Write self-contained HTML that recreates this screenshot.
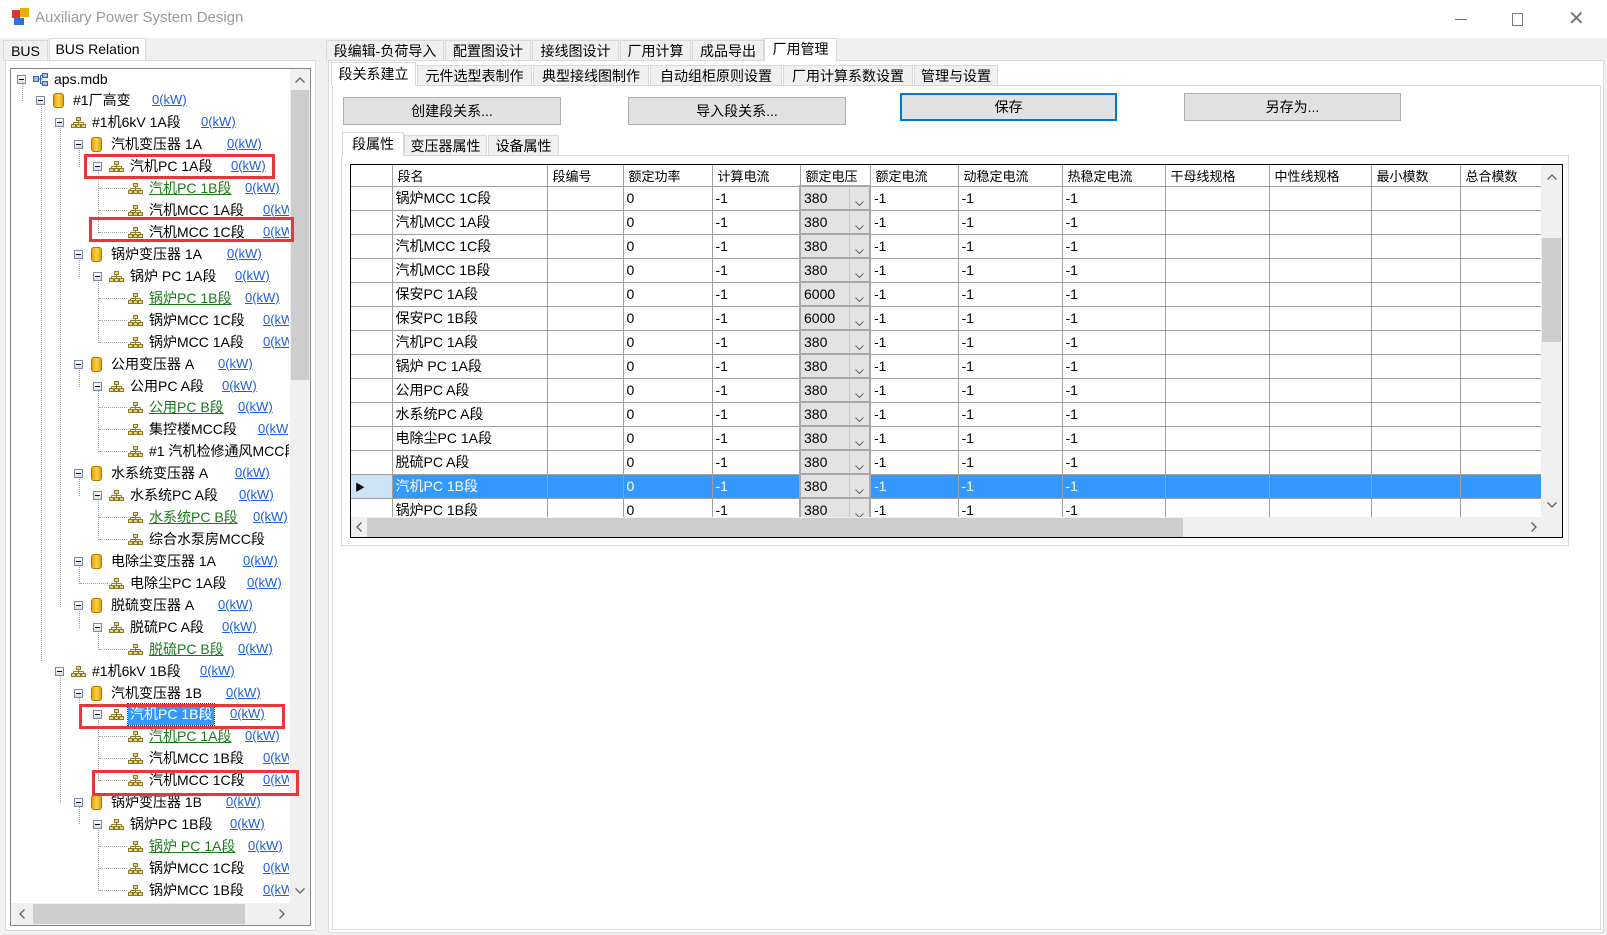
<!DOCTYPE html>
<html><head><meta charset="utf-8">
<style>
*{box-sizing:border-box;margin:0;padding:0}
body{width:1607px;height:935px;overflow:hidden;background:#f0f0f0;font-family:"Liberation Sans","Noto Sans CJK SC",sans-serif;font-size:14px;color:#000;position:relative}
.a{position:absolute;white-space:nowrap}
.tab{position:absolute;border:1px solid #d9d9d9;border-bottom:none;background:#f0f0f0;text-align:center;line-height:20px;font-size:14px}
.sel{background:#fff}
.btn{position:absolute;background:#e1e1e1;border:1px solid #adadad;text-align:center;font-size:14px}
.r{position:absolute;left:0;width:300px;height:21px}
.r>*{position:absolute}
.t{top:0;line-height:21px;font-size:14px;white-space:nowrap}
.bx{top:6px;width:9px;height:9px;border:1px solid #7a8aa6;background:linear-gradient(#fff,#d8dce4)}
.bx:after{content:"";position:absolute;left:1px;top:3px;width:5px;height:1px;background:#000}
.cy{top:3px;width:11px;height:15px;border-radius:3px;background:linear-gradient(90deg,#e8a000,#ffd24d,#e8a000);border:1px solid #b07800}
.nt{top:5px;width:15px;height:11px}
.kw{top:2px;color:#1a5fd8;text-decoration:underline;font-size:13px;line-height:16px;white-space:nowrap}
.g{color:#1a7a1a;text-decoration:underline}
.hl{position:absolute;border-top:1px dotted #a0a0a0;height:0}
.vl{position:absolute;border-left:1px dotted #a0a0a0;width:0}
.red{position:absolute;border:3px solid #e8363a}
table{border-collapse:collapse;table-layout:fixed}
td{border:1px solid #a0a0a0;height:24px;padding:0 0 0 3px;font-size:14px;overflow:hidden;white-space:nowrap}
th{border:1px solid #a0a0a0;border-top:none;height:21px;font-weight:normal;text-align:left;padding-left:5px;font-size:13px;white-space:nowrap;overflow:hidden}
td.v{background:#e3e3e3;border:2px solid #a8a8a8;position:relative}
td.v:after{content:"";position:absolute;right:0;top:0;width:19px;height:100%;border-left:1px solid #c8c8c8;}
td.v i{position:absolute;right:5px;top:7px;width:9px;height:6px;z-index:1}
tr.s td{background:#3399ff;color:#fff}
</style></head><body>
<svg width="0" height="0" style="position:absolute">
<symbol id="net" viewBox="0 0 15 11"><rect x="5.5" y="0.5" width="4" height="3" fill="#f4d76a" stroke="#8a7a30"/><path d="M7.5 3.5V5.5M2.5 5.5H12.5M2.5 5.5V7.5M7.5 5.5V7.5M12.5 5.5V7.5" stroke="#8a7a30" fill="none"/><rect x="0.5" y="7.5" width="4" height="3" fill="#f4d76a" stroke="#8a7a30"/><rect x="5.5" y="7.5" width="4" height="3" fill="#f4d76a" stroke="#8a7a30"/><rect x="10.5" y="7.5" width="4" height="3" fill="#f4d76a" stroke="#8a7a30"/></symbol>
<symbol id="chv" viewBox="0 0 9 6"><path d="M0.5 0.5L4.5 4.5L8.5 0.5" stroke="#666" fill="none"/></symbol>
</svg>
<!-- title bar -->
<div class="a" style="left:0;top:0;width:1607px;height:38px;background:#fff"></div>
<div class="a" style="left:12px;top:10px;width:8px;height:8px;background:#d33"></div>
<div class="a" style="left:20px;top:8px;width:9px;height:9px;background:#e8b000"></div>
<div class="a" style="left:14px;top:18px;width:10px;height:7px;background:#3a6fd8"></div>
<div class="a" style="left:35px;top:9px;font-size:15px;color:#9a9a9a">Auxiliary Power System Design</div>
<div class="a" style="left:1455px;top:19px;width:12px;height:1px;background:#777"></div>
<div class="a" style="left:1512px;top:13px;width:11px;height:13px;border:1px solid #777"></div>
<div class="a" style="left:1568px;top:6px;font-size:20px;color:#777;font-weight:200">✕</div>

<!-- left tabs -->
<div class="tab" style="left:3px;top:40px;width:45px;height:21px">BUS</div>
<div class="tab sel" style="left:49px;top:38px;width:97px;height:23px;line-height:20px">BUS Relation</div>
<div class="a" style="left:5px;top:60px;width:311px;height:871px;background:#fff;border:1px solid #d9d9d9"></div>
<div class="a" style="left:10px;top:68px;width:301px;height:858px;border:1px solid #828790;background:#fff;overflow:hidden">
<div style="position:absolute;left:279px;top:0;width:20px;height:834px;background:#f0f0f0"></div>
<div style="position:absolute;left:280px;top:21px;width:18px;height:290px;background:#cdcdcd"></div>
<svg style="position:absolute;left:284px;top:8px" width="10" height="6"><path d="M0.5 5.5L5 1L9.5 5.5" stroke="#606060" fill="none" stroke-width="1.3"/></svg>
<svg style="position:absolute;left:284px;top:819px" width="10" height="6"><path d="M0.5 0.5L5 5L9.5 0.5" stroke="#606060" fill="none" stroke-width="1.3"/></svg>
<div style="position:absolute;left:0;top:834px;width:299px;height:22px;background:#f0f0f0"></div>
<div style="position:absolute;left:22px;top:835px;width:212px;height:20px;background:#cdcdcd"></div>
<svg style="position:absolute;left:8px;top:840px" width="6" height="10"><path d="M5.5 0.5L1 5L5.5 9.5" stroke="#606060" fill="none" stroke-width="1.3"/></svg>
<svg style="position:absolute;left:268px;top:840px" width="6" height="10"><path d="M0.5 0.5L5 5L0.5 9.5" stroke="#606060" fill="none" stroke-width="1.3"/></svg>
</div>

<!-- right main tabs -->
<div class="tab" style="left:326px;top:40px;width:118px;height:21px">段编辑-负荷导入</div>
<div class="tab" style="left:445px;top:40px;width:86px;height:21px">配置图设计</div>
<div class="tab" style="left:532px;top:40px;width:87px;height:21px">接线图设计</div>
<div class="tab" style="left:620px;top:40px;width:71px;height:21px">厂用计算</div>
<div class="tab" style="left:692px;top:40px;width:72px;height:21px">成品导出</div>
<div class="a" style="left:328px;top:60px;width:1276px;height:873px;background:#fff;border:1px solid #d9d9d9"></div>
<div class="tab sel" style="left:764px;top:38px;width:73px;height:23px;border-color:#d9d9d9">厂用管理</div>
<div class="tab" style="left:417px;top:65px;width:115px;height:21px">元件选型表制作</div>
<div class="tab" style="left:533px;top:65px;width:116px;height:21px">典型接线图制作</div>
<div class="tab" style="left:650px;top:65px;width:132px;height:21px">自动组柜原则设置</div>
<div class="tab" style="left:783px;top:65px;width:130px;height:21px">厂用计算系数设置</div>
<div class="tab" style="left:914px;top:65px;width:84px;height:21px">管理与设置</div>
<div class="a" style="left:332px;top:85px;width:1269px;height:845px;background:#fff;border:1px solid #d9d9d9"></div>
<div class="tab sel" style="left:331px;top:62px;width:85px;height:24px;line-height:22px">段关系建立</div>

<div class="btn" style="left:343px;top:97px;width:218px;height:28px;line-height:26px">创建段关系...</div>
<div class="btn" style="left:628px;top:97px;width:218px;height:28px;line-height:26px">导入段关系...</div>
<div class="btn" style="left:900px;top:93px;width:217px;height:28px;line-height:24px;border:2px solid #0078d7">保存</div>
<div class="btn" style="left:1184px;top:93px;width:217px;height:28px;line-height:26px">另存为...</div>

<div class="tab" style="left:404px;top:135px;width:83px;height:21px">变压器属性</div>
<div class="tab" style="left:488px;top:135px;width:71px;height:21px">设备属性</div>
<div class="a" style="left:341px;top:155px;width:1228px;height:391px;background:#fff;border:1px solid #d9d9d9"></div>
<div class="tab sel" style="left:342px;top:132px;width:62px;height:24px;line-height:22px">段属性</div>

<!-- grid -->
<div class="a" style="left:350px;top:164px;width:1213px;height:374px;border:1px solid #000;background:#fff;overflow:hidden">
<div style="position:absolute;left:0;top:0;width:1190px;height:352px;overflow:hidden">
<table style="width:1190px">
<colgroup><col style="width:41px"><col style="width:155px"><col style="width:76px"><col style="width:89px"><col style="width:88px"><col style="width:70px"><col style="width:88px"><col style="width:104px"><col style="width:103px"><col style="width:104px"><col style="width:102px"><col style="width:89px"><col style="width:81px"></colgroup>
<tr><th style="border-left:none"></th><th>段名</th><th>段编号</th><th>额定功率</th><th>计算电流</th><th>额定电压</th><th>额定电流</th><th>动稳定电流</th><th>热稳定电流</th><th>干母线规格</th><th>中性线规格</th><th>最小模数</th><th>总合模数</th></tr>
<tr><td style="border-left:none"></td><td>锅炉MCC 1C段</td><td></td><td>0</td><td>-1</td><td class="v">380<i><svg width="9" height="6"><use href="#chv"/></svg></i></td><td>-1</td><td>-1</td><td>-1</td><td></td><td></td><td></td><td></td></tr>
<tr><td style="border-left:none"></td><td>汽机MCC 1A段</td><td></td><td>0</td><td>-1</td><td class="v">380<i><svg width="9" height="6"><use href="#chv"/></svg></i></td><td>-1</td><td>-1</td><td>-1</td><td></td><td></td><td></td><td></td></tr>
<tr><td style="border-left:none"></td><td>汽机MCC 1C段</td><td></td><td>0</td><td>-1</td><td class="v">380<i><svg width="9" height="6"><use href="#chv"/></svg></i></td><td>-1</td><td>-1</td><td>-1</td><td></td><td></td><td></td><td></td></tr>
<tr><td style="border-left:none"></td><td>汽机MCC 1B段</td><td></td><td>0</td><td>-1</td><td class="v">380<i><svg width="9" height="6"><use href="#chv"/></svg></i></td><td>-1</td><td>-1</td><td>-1</td><td></td><td></td><td></td><td></td></tr>
<tr><td style="border-left:none"></td><td>保安PC 1A段</td><td></td><td>0</td><td>-1</td><td class="v">6000<i><svg width="9" height="6"><use href="#chv"/></svg></i></td><td>-1</td><td>-1</td><td>-1</td><td></td><td></td><td></td><td></td></tr>
<tr><td style="border-left:none"></td><td>保安PC 1B段</td><td></td><td>0</td><td>-1</td><td class="v">6000<i><svg width="9" height="6"><use href="#chv"/></svg></i></td><td>-1</td><td>-1</td><td>-1</td><td></td><td></td><td></td><td></td></tr>
<tr><td style="border-left:none"></td><td>汽机PC 1A段</td><td></td><td>0</td><td>-1</td><td class="v">380<i><svg width="9" height="6"><use href="#chv"/></svg></i></td><td>-1</td><td>-1</td><td>-1</td><td></td><td></td><td></td><td></td></tr>
<tr><td style="border-left:none"></td><td>锅炉 PC 1A段</td><td></td><td>0</td><td>-1</td><td class="v">380<i><svg width="9" height="6"><use href="#chv"/></svg></i></td><td>-1</td><td>-1</td><td>-1</td><td></td><td></td><td></td><td></td></tr>
<tr><td style="border-left:none"></td><td>公用PC A段</td><td></td><td>0</td><td>-1</td><td class="v">380<i><svg width="9" height="6"><use href="#chv"/></svg></i></td><td>-1</td><td>-1</td><td>-1</td><td></td><td></td><td></td><td></td></tr>
<tr><td style="border-left:none"></td><td>水系统PC A段</td><td></td><td>0</td><td>-1</td><td class="v">380<i><svg width="9" height="6"><use href="#chv"/></svg></i></td><td>-1</td><td>-1</td><td>-1</td><td></td><td></td><td></td><td></td></tr>
<tr><td style="border-left:none"></td><td>电除尘PC 1A段</td><td></td><td>0</td><td>-1</td><td class="v">380<i><svg width="9" height="6"><use href="#chv"/></svg></i></td><td>-1</td><td>-1</td><td>-1</td><td></td><td></td><td></td><td></td></tr>
<tr><td style="border-left:none"></td><td>脱硫PC A段</td><td></td><td>0</td><td>-1</td><td class="v">380<i><svg width="9" height="6"><use href="#chv"/></svg></i></td><td>-1</td><td>-1</td><td>-1</td><td></td><td></td><td></td><td></td></tr>
<tr class="s"><td style="border-left:none;background:#cce4f7;color:#000;font-size:10px;padding-left:4px">▶</td><td>汽机PC 1B段</td><td></td><td>0</td><td>-1</td><td class="v" style="background:#e3e3e3;color:#000">380<i><svg width="9" height="6"><use href="#chv"/></svg></i></td><td>-1</td><td>-1</td><td>-1</td><td></td><td></td><td></td><td></td></tr>
<tr><td style="border-left:none"></td><td>锅炉PC 1B段</td><td></td><td>0</td><td>-1</td><td class="v">380<i><svg width="9" height="6"><use href="#chv"/></svg></i></td><td>-1</td><td>-1</td><td>-1</td><td></td><td></td><td></td><td></td></tr>
</table></div>
<div style="position:absolute;left:1190px;top:0;width:21px;height:352px;background:#f0f0f0"></div>
<div style="position:absolute;left:1191px;top:73px;width:19px;height:104px;background:#cdcdcd"></div>
<svg style="position:absolute;left:1196px;top:9px" width="10" height="6"><path d="M0.5 5.5L5 1L9.5 5.5" stroke="#606060" fill="none" stroke-width="1.3"/></svg>
<svg style="position:absolute;left:1196px;top:337px" width="10" height="6"><path d="M0.5 0.5L5 5L9.5 0.5" stroke="#606060" fill="none" stroke-width="1.3"/></svg>
<div style="position:absolute;left:0;top:352px;width:1211px;height:21px;background:#f0f0f0"></div>
<div style="position:absolute;left:16px;top:353px;width:816px;height:19px;background:#cdcdcd"></div>
<svg style="position:absolute;left:5px;top:357px" width="6" height="10"><path d="M5.5 0.5L1 5L5.5 9.5" stroke="#606060" fill="none" stroke-width="1.3"/></svg>
<svg style="position:absolute;left:1180px;top:357px" width="6" height="10"><path d="M0.5 0.5L5 5L0.5 9.5" stroke="#606060" fill="none" stroke-width="1.3"/></svg>
</div>

<!-- tree -->
<div class="a" style="left:11px;top:69px;width:278px;height:834px;overflow:hidden">
<div style="position:relative;left:-11px;top:-69px;width:300px;height:935px">
<!-- vertical guides -->
<div class="vl" style="left:22px;top:80px;height:21px"></div>
<div class="vl" style="left:41px;top:101px;height:560px"></div>
<div class="vl" style="left:60px;top:123px;height:484px"></div>
<div class="vl" style="left:60px;top:671px;height:132px"></div>
<div class="vl" style="left:79px;top:145px;height:22px"></div>
<div class="vl" style="left:79px;top:255px;height:22px"></div>
<div class="vl" style="left:79px;top:365px;height:22px"></div>
<div class="vl" style="left:79px;top:474px;height:22px"></div>
<div class="vl" style="left:79px;top:562px;height:22px"></div>
<div class="vl" style="left:79px;top:606px;height:22px"></div>
<div class="vl" style="left:79px;top:694px;height:21px"></div>
<div class="vl" style="left:79px;top:803px;height:21px"></div>
<div class="vl" style="left:98px;top:167px;height:66px"></div>
<div class="vl" style="left:98px;top:277px;height:66px"></div>
<div class="vl" style="left:98px;top:387px;height:65px"></div>
<div class="vl" style="left:98px;top:496px;height:44px"></div>
<div class="vl" style="left:98px;top:628px;height:22px"></div>
<div class="vl" style="left:98px;top:715px;height:66px"></div>
<div class="vl" style="left:98px;top:824px;height:67px"></div>

<div class="r" style="top:69px"><div class="bx" style="left:17px"></div><svg style="left:33px;top:4px" width="16" height="13"><rect x="0.5" y="3.5" width="5" height="5" fill="#9cc3f0" stroke="#2f5fb0"/><rect x="9.5" y="0.5" width="5" height="4" fill="#9cc3f0" stroke="#2f5fb0"/><rect x="9.5" y="8.5" width="5" height="4" fill="#9cc3f0" stroke="#2f5fb0"/><path d="M5.5 6H9.5M7.5 2.5V10.5H9.5M7.5 2.5H9.5" stroke="#2f5fb0" fill="none"/></svg><div class="t" style="left:54px">aps.mdb</div></div>

<div class="r" style="top:90px"><div class="bx" style="left:36px"></div><div class="cy" style="left:53px"></div><div class="t" style="left:73px">#1厂高变</div><div class="kw" style="left:152px">0(kW)</div></div>
<div class="r" style="top:112px"><div class="hl" style="left:60px;top:10px;width:0"></div><div class="bx" style="left:55px"></div><svg class="nt" style="left:71px"><use href="#net"/></svg><div class="t" style="left:92px">#1机6kV 1A段</div><div class="kw" style="left:201px">0(kW)</div></div>
<div class="r" style="top:134px"><div class="bx" style="left:74px"></div><div class="cy" style="left:91px"></div><div class="t" style="left:111px">汽机变压器 1A</div><div class="kw" style="left:227px">0(kW)</div></div>
<div class="r" style="top:156px"><div class="bx" style="left:93px"></div><svg class="nt" style="left:109px"><use href="#net"/></svg><div class="t" style="left:130px">汽机PC 1A段</div><div class="kw" style="left:231px">0(kW)</div></div>
<div class="r" style="top:178px"><div class="hl" style="left:99px;top:10px;width:28px"></div><svg class="nt" style="left:128px"><use href="#net"/></svg><div class="t g" style="left:149px">汽机PC 1B段</div><div class="kw" style="left:245px">0(kW)</div></div>
<div class="r" style="top:200px"><div class="hl" style="left:99px;top:10px;width:28px"></div><svg class="nt" style="left:128px"><use href="#net"/></svg><div class="t" style="left:149px">汽机MCC 1A段</div><div class="kw" style="left:263px">0(kW)</div></div>
<div class="r" style="top:222px"><div class="hl" style="left:99px;top:10px;width:28px"></div><svg class="nt" style="left:128px"><use href="#net"/></svg><div class="t" style="left:149px">汽机MCC 1C段</div><div class="kw" style="left:263px">0(kW)</div></div>

<div class="r" style="top:244px"><div class="bx" style="left:74px"></div><div class="cy" style="left:91px"></div><div class="t" style="left:111px">锅炉变压器 1A</div><div class="kw" style="left:227px">0(kW)</div></div>
<div class="r" style="top:266px"><div class="bx" style="left:93px"></div><svg class="nt" style="left:109px"><use href="#net"/></svg><div class="t" style="left:130px">锅炉 PC 1A段</div><div class="kw" style="left:235px">0(kW)</div></div>
<div class="r" style="top:288px"><div class="hl" style="left:99px;top:10px;width:28px"></div><svg class="nt" style="left:128px"><use href="#net"/></svg><div class="t g" style="left:149px">锅炉PC 1B段</div><div class="kw" style="left:245px">0(kW)</div></div>
<div class="r" style="top:310px"><div class="hl" style="left:99px;top:10px;width:28px"></div><svg class="nt" style="left:128px"><use href="#net"/></svg><div class="t" style="left:149px">锅炉MCC 1C段</div><div class="kw" style="left:263px">0(kW)</div></div>
<div class="r" style="top:332px"><div class="hl" style="left:99px;top:10px;width:28px"></div><svg class="nt" style="left:128px"><use href="#net"/></svg><div class="t" style="left:149px">锅炉MCC 1A段</div><div class="kw" style="left:263px">0(kW)</div></div>

<div class="r" style="top:354px"><div class="bx" style="left:74px"></div><div class="cy" style="left:91px"></div><div class="t" style="left:111px">公用变压器 A</div><div class="kw" style="left:218px">0(kW)</div></div>
<div class="r" style="top:376px"><div class="bx" style="left:93px"></div><svg class="nt" style="left:109px"><use href="#net"/></svg><div class="t" style="left:130px">公用PC A段</div><div class="kw" style="left:222px">0(kW)</div></div>
<div class="r" style="top:397px"><div class="hl" style="left:99px;top:10px;width:28px"></div><svg class="nt" style="left:128px"><use href="#net"/></svg><div class="t g" style="left:149px">公用PC B段</div><div class="kw" style="left:238px">0(kW)</div></div>
<div class="r" style="top:419px"><div class="hl" style="left:99px;top:10px;width:28px"></div><svg class="nt" style="left:128px"><use href="#net"/></svg><div class="t" style="left:149px">集控楼MCC段</div><div class="kw" style="left:258px">0(kW)</div></div>
<div class="r" style="top:441px"><div class="hl" style="left:99px;top:10px;width:28px"></div><svg class="nt" style="left:128px"><use href="#net"/></svg><div class="t" style="left:149px">#1 汽机检修通风MCC段</div></div>

<div class="r" style="top:463px"><div class="bx" style="left:74px"></div><div class="cy" style="left:91px"></div><div class="t" style="left:111px">水系统变压器 A</div><div class="kw" style="left:235px">0(kW)</div></div>
<div class="r" style="top:485px"><div class="bx" style="left:93px"></div><svg class="nt" style="left:109px"><use href="#net"/></svg><div class="t" style="left:130px">水系统PC A段</div><div class="kw" style="left:239px">0(kW)</div></div>
<div class="r" style="top:507px"><div class="hl" style="left:99px;top:10px;width:28px"></div><svg class="nt" style="left:128px"><use href="#net"/></svg><div class="t g" style="left:149px">水系统PC B段</div><div class="kw" style="left:253px">0(kW)</div></div>
<div class="r" style="top:529px"><div class="hl" style="left:99px;top:10px;width:28px"></div><svg class="nt" style="left:128px"><use href="#net"/></svg><div class="t" style="left:149px">综合水泵房MCC段</div></div>

<div class="r" style="top:551px"><div class="bx" style="left:74px"></div><div class="cy" style="left:91px"></div><div class="t" style="left:111px">电除尘变压器 1A</div><div class="kw" style="left:243px">0(kW)</div></div>
<div class="r" style="top:573px"><div class="hl" style="left:80px;top:10px;width:28px"></div><svg class="nt" style="left:109px"><use href="#net"/></svg><div class="t" style="left:130px">电除尘PC 1A段</div><div class="kw" style="left:247px">0(kW)</div></div>

<div class="r" style="top:595px"><div class="bx" style="left:74px"></div><div class="cy" style="left:91px"></div><div class="t" style="left:111px">脱硫变压器 A</div><div class="kw" style="left:218px">0(kW)</div></div>
<div class="r" style="top:617px"><div class="bx" style="left:93px"></div><svg class="nt" style="left:109px"><use href="#net"/></svg><div class="t" style="left:130px">脱硫PC A段</div><div class="kw" style="left:222px">0(kW)</div></div>
<div class="r" style="top:639px"><div class="hl" style="left:99px;top:10px;width:28px"></div><svg class="nt" style="left:128px"><use href="#net"/></svg><div class="t g" style="left:149px">脱硫PC B段</div><div class="kw" style="left:238px">0(kW)</div></div>

<div class="r" style="top:661px"><div class="bx" style="left:55px"></div><svg class="nt" style="left:71px"><use href="#net"/></svg><div class="t" style="left:92px">#1机6kV 1B段</div><div class="kw" style="left:200px">0(kW)</div></div>
<div class="r" style="top:683px"><div class="bx" style="left:74px"></div><div class="cy" style="left:91px"></div><div class="t" style="left:111px">汽机变压器 1B</div><div class="kw" style="left:226px">0(kW)</div></div>
<div class="r" style="top:704px"><div class="bx" style="left:93px"></div><svg class="nt" style="left:109px"><use href="#net"/></svg><div class="t" style="left:128px;background:#3399ff;color:#fff;padding:0 2px;outline:1px dotted #333">汽机PC 1B段</div><div class="kw" style="left:230px">0(kW)</div></div>
<div class="r" style="top:726px"><div class="hl" style="left:99px;top:10px;width:28px"></div><svg class="nt" style="left:128px"><use href="#net"/></svg><div class="t g" style="left:149px">汽机PC 1A段</div><div class="kw" style="left:245px">0(kW)</div></div>
<div class="r" style="top:748px"><div class="hl" style="left:99px;top:10px;width:28px"></div><svg class="nt" style="left:128px"><use href="#net"/></svg><div class="t" style="left:149px">汽机MCC 1B段</div><div class="kw" style="left:263px">0(kW)</div></div>
<div class="r" style="top:770px"><div class="hl" style="left:99px;top:10px;width:28px"></div><svg class="nt" style="left:128px"><use href="#net"/></svg><div class="t" style="left:149px">汽机MCC 1C段</div><div class="kw" style="left:263px">0(kW)</div></div>

<div class="r" style="top:792px"><div class="bx" style="left:74px"></div><div class="cy" style="left:91px"></div><div class="t" style="left:111px">锅炉变压器 1B</div><div class="kw" style="left:226px">0(kW)</div></div>
<div class="r" style="top:814px"><div class="bx" style="left:93px"></div><svg class="nt" style="left:109px"><use href="#net"/></svg><div class="t" style="left:130px">锅炉PC 1B段</div><div class="kw" style="left:230px">0(kW)</div></div>
<div class="r" style="top:836px"><div class="hl" style="left:99px;top:10px;width:28px"></div><svg class="nt" style="left:128px"><use href="#net"/></svg><div class="t g" style="left:149px">锅炉 PC 1A段</div><div class="kw" style="left:248px">0(kW)</div></div>
<div class="r" style="top:858px"><div class="hl" style="left:99px;top:10px;width:28px"></div><svg class="nt" style="left:128px"><use href="#net"/></svg><div class="t" style="left:149px">锅炉MCC 1C段</div><div class="kw" style="left:263px">0(kW)</div></div>
<div class="r" style="top:880px"><div class="hl" style="left:99px;top:10px;width:28px"></div><svg class="nt" style="left:128px"><use href="#net"/></svg><div class="t" style="left:149px">锅炉MCC 1B段</div><div class="kw" style="left:263px">0(kW)</div></div>
</div></div>

<div class="red" style="left:84px;top:154px;width:191px;height:25px"></div>
<div class="red" style="left:89px;top:217px;width:205px;height:25px"></div>
<div class="red" style="left:79px;top:704px;width:206px;height:25px"></div>
<div class="red" style="left:92px;top:770px;width:207px;height:26px"></div>
</body></html>
